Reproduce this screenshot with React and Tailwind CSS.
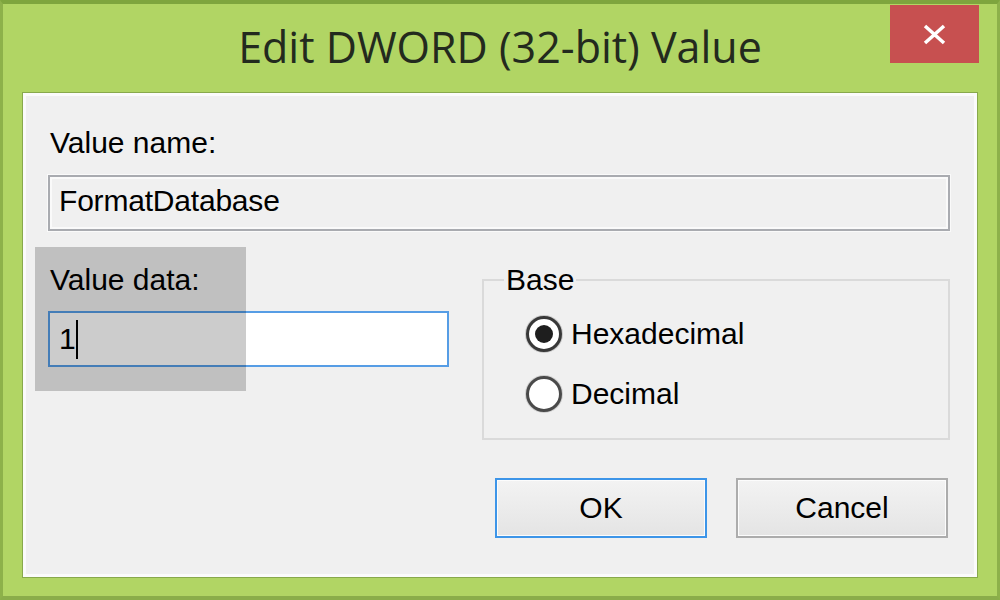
export default function App() {
  const body = "font-['Liberation_Sans',Arial,sans-serif] text-[30px] leading-[34px] text-black";
  return (
    <div className="w-[1000px] h-[600px] overflow-hidden bg-[#b1d564] border-t-[4px] border-t-[#7ea53e] border-x-[3px] border-x-[#8db14a] border-b-[4px] border-b-[#8aad4a] flex flex-col">
      {/* Title bar */}
      <div className="relative h-[88px] flex justify-center pt-[21px] shrink-0">
        <div className="font-['Open_Sans','Noto_Sans',sans-serif] text-[43px] leading-[43px] text-[#232a1e]">
          Edit DWORD (32-bit) Value
        </div>
        <div className="absolute top-[1px] right-[18px] w-[89px] h-[58px] bg-[#c75050] flex items-center justify-center">
          <svg width="25" height="21" viewBox="0 0 25 21">
            <path d="M3 2 L22 19 M22 2 L3 19" stroke="#ffffff" strokeWidth="3.5" fill="none" />
          </svg>
        </div>
      </div>

      {/* Client panel */}
      <div className="mx-[19px] h-[486px] shrink-0 border border-[#88a94c]">
        <div className={`relative h-full border-[3px] border-[#fbfbfb] bg-[#f0f0f0] flex flex-col ${body}`}>
          <div className="mt-[30px] ml-[24px]">Value name:</div>
          <div className="mt-[15px] ml-[22px] mr-[24px] h-[56px] border-2 border-[#a9abb0] shadow-[0_0_0_1px_#fafafa,inset_0_0_0_2px_#fafafa] bg-[#f0f0f0] pl-[9px] pt-[7px] tracking-[-0.2px]">
            FormatDatabase
          </div>

          <div className="flex items-start ml-[22px]">
            <div className="w-[401px] flex flex-col">
              <div className="mt-[32px] ml-[2px]">Value data:</div>
              <div className="mt-[14px] h-[56px] border-2 border-[#569de5] bg-white flex items-center pl-[9px]">
                <span>1</span>
                <span className="inline-block w-[2px] h-[39px] bg-black"></span>
              </div>
            </div>
            <fieldset className="ml-[33px] mt-[32px] w-[468px] border-2 border-[#dadada] pt-[19px] pb-[26px] pl-[42px]">
              <legend className="-ml-[22px] px-[2px]">Base</legend>
              <div className="flex items-center h-[36px]">
                <div className="w-[36px] h-[36px] rounded-full border-[3px] border-[#383838] bg-white shadow-[0_0_0_1px_#c9c9c9] flex items-center justify-center">
                  <div className="w-[18px] h-[18px] rounded-full bg-[#1e1e1e]"></div>
                </div>
                <span className="ml-[9px]">Hexadecimal</span>
              </div>
              <div className="flex items-center h-[36px] mt-[24px]">
                <div className="w-[36px] h-[36px] rounded-full border-[3px] border-[#4a4a4a] bg-white shadow-[0_0_0_1px_#cfcfcf]"></div>
                <span className="ml-[9px]">Decimal</span>
              </div>
            </fieldset>
          </div>

          <div className="mt-[38px] flex justify-end gap-[29px] pr-[26px]">
            <div className="w-[212px] h-[60px] border-2 border-[#3d95e8] bg-linear-to-b from-[#f3f3f3] to-[#e4e4e4] shadow-[inset_0_0_0_1px_#fcfcfc] flex items-center justify-center">
              OK
            </div>
            <div className="w-[212px] h-[60px] border-2 border-[#acacac] bg-linear-to-b from-[#f3f3f3] to-[#e4e4e4] shadow-[inset_0_0_0_1px_#fcfcfc] flex items-center justify-center">
              Cancel
            </div>
          </div>

          {/* Selection overlay */}
          <div className="absolute left-[9px] top-[151px] w-[211px] h-[144px] bg-black/20"></div>
        </div>
      </div>
    </div>
  );
}
